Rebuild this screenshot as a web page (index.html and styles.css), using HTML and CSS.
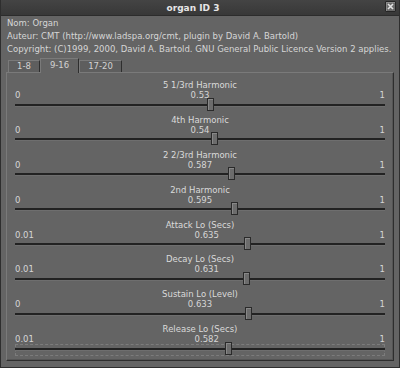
FILE: index.html
```html
<!DOCTYPE html>
<html lang="fr">
<head>
	<meta charset="UTF-8">
	<title>organ ID 3</title>
	<link rel="stylesheet" href="styles.css">
</head>
<body>
	<div class="window">
		<!-- title bar -->
		<div class="titlebar">
			<span class="title">organ ID 3</span>
			<span class="close">
				<svg width="7" height="7" viewBox="0 0 7 7"><path d="M1 1 L6 6 M6 1 L1 6" stroke="#e4e4e4" stroke-width="1.6"/></svg>
			</span>
		</div>

		<div class="body">
			<!-- plugin info -->
			<div class="info">
				<p>Nom: Organ</p>
				<p>Auteur: CMT (http://www.ladspa.org/cmt, plugin by David A. Bartold)</p>
				<p>Copyright: (C)1999, 2000, David A. Bartold. GNU General Public Licence Version 2 applies.</p>
			</div>

			<!-- tabs -->
			<div class="tabs">
				<span class="tab">1-8</span>
				<span class="tab active">9-16</span>
				<span class="tab">17-20</span>
			</div>

			<div class="panel">
				<div class="row">
					<div class="label">5 1/3rd Harmonic</div>
					<div class="values"><span>0</span><span>0.53</span><span>1</span></div>
					<div class="slider"><div class="trough"></div><div class="thumb" style="--v:0.53"></div></div>
				</div>
				<div class="row">
					<div class="label">4th Harmonic</div>
					<div class="values"><span>0</span><span>0.54</span><span>1</span></div>
					<div class="slider"><div class="trough"></div><div class="thumb" style="--v:0.54"></div></div>
				</div>
				<div class="row">
					<div class="label">2 2/3rd Harmonic</div>
					<div class="values"><span>0</span><span>0.587</span><span>1</span></div>
					<div class="slider"><div class="trough"></div><div class="thumb" style="--v:0.587"></div></div>
				</div>
				<div class="row">
					<div class="label">2nd Harmonic</div>
					<div class="values"><span>0</span><span>0.595</span><span>1</span></div>
					<div class="slider"><div class="trough"></div><div class="thumb" style="--v:0.595"></div></div>
				</div>
				<div class="row">
					<div class="label">Attack Lo (Secs)</div>
					<div class="values"><span>0.01</span><span>0.635</span><span>1</span></div>
					<div class="slider"><div class="trough"></div><div class="thumb" style="--v:0.6313"></div></div>
				</div>
				<div class="row">
					<div class="label">Decay Lo (Secs)</div>
					<div class="values"><span>0.01</span><span>0.631</span><span>1</span></div>
					<div class="slider"><div class="trough"></div><div class="thumb" style="--v:0.6273"></div></div>
				</div>
				<div class="row">
					<div class="label">Sustain Lo (Level)</div>
					<div class="values"><span>0</span><span>0.633</span><span>1</span></div>
					<div class="slider"><div class="trough"></div><div class="thumb" style="--v:0.633"></div></div>
				</div>
				<div class="row">
					<div class="label">Release Lo (Secs)</div>
					<div class="values"><span>0.01</span><span>0.582</span><span>1</span></div>
					<div class="slider focus"><div class="trough"></div><div class="thumb" style="--v:0.5778"></div></div>
				</div>
			</div>
		</div>
	</div>
</body>
</html>
```

FILE: styles.css
```css
html,
body {
	margin: 0;
	padding: 0;
	background: #646464;
}

* {
	box-sizing: border-box;
}

.window {
	width: 400px;
	height: 368px;
	border: 1px solid #2e2e2e;
	border-top: none;
	background: #646464;
	font-family: "DejaVu Sans", sans-serif;
	font-size: 8.5px;
	color: #d6d6d6;
	overflow: hidden;
}

/* title bar */
.titlebar {
	display: flex;
	align-items: center;
	height: 16px;
	background: linear-gradient(#444, #383838);
	border-bottom: 1px solid #2c2c2c;
	padding-right: 3px;
}

.title {
	flex: 1;
	text-align: center;
	font-weight: bold;
	font-size: 9px;
	color: #e6e6e6;
}

.close {
	display: flex;
	align-items: center;
	justify-content: center;
	width: 11px;
	height: 11px;
	margin-top: -2px;
	background: #6a6a6a;
	border: 1px solid #262626;
	border-radius: 1px;
	box-shadow: inset 1px 1px 0 #8a8a8a;
}

.body {
	padding: 0 5px 6px;
}

/* info lines */
.info {
	padding-top: 1px;
	padding-left: 1px;
}

.info p {
	margin: 0;
	line-height: 13px;
	white-space: nowrap;
}

/* tabs */
.tabs {
	display: flex;
	align-items: flex-end;
	height: 16px;
	padding-left: 2px;
}

.tab {
	height: 12px;
	line-height: 11px;
	padding: 0 8px;
	border: 1px solid #7a7a7a;
	border-bottom: none;
	border-right-color: #2e2e2e;
	background: #5e5e5e;
	color: #d2d2d2;
}

.tab.active {
	height: 15px;
	line-height: 13px;
	padding: 0 9px;
	margin-bottom: -1px;
	background: #646464;
	position: relative;
	border-right: 1px solid #2e2e2e;
}

/* notebook panel */
.panel {
	border: 1px solid #2e2e2e;
	border-top-color: #7a7a7a;
	border-left-color: #7a7a7a;
	box-shadow: inset -1px -1px 0 #555;
	padding: 7px 8px 1px 8px;
	height: 289px;
}

.row {
	height: 34.9px;
}

.label {
	height: 10px;
	line-height: 10px;
	text-align: center;
	color: #dadada;
}

.values {
	display: flex;
	justify-content: space-between;
	height: 10px;
	line-height: 10px;
}

.slider {
	position: relative;
	height: 13px;
	margin-top: -2.5px;
}

.trough {
	position: absolute;
	left: 0;
	right: 0;
	top: 6px;
	height: 3px;
	background: #222;
	border-bottom: 1px solid #6e6e6e;
}

.thumb {
	position: absolute;
	top: 0;
	width: 7px;
	height: 13px;
	left: calc(var(--v) * (100% - 7px));
	background: #6c6c6c;
	border: 1px solid #2a2a2a;
	box-shadow: inset 1px 1px 0 #888;
}

.focus::before {
	content: "";
	position: absolute;
	left: 0;
	right: 0;
	top: 2px;
	height: 10px;
	border: 1px dashed #7c7c7c;
}
```
